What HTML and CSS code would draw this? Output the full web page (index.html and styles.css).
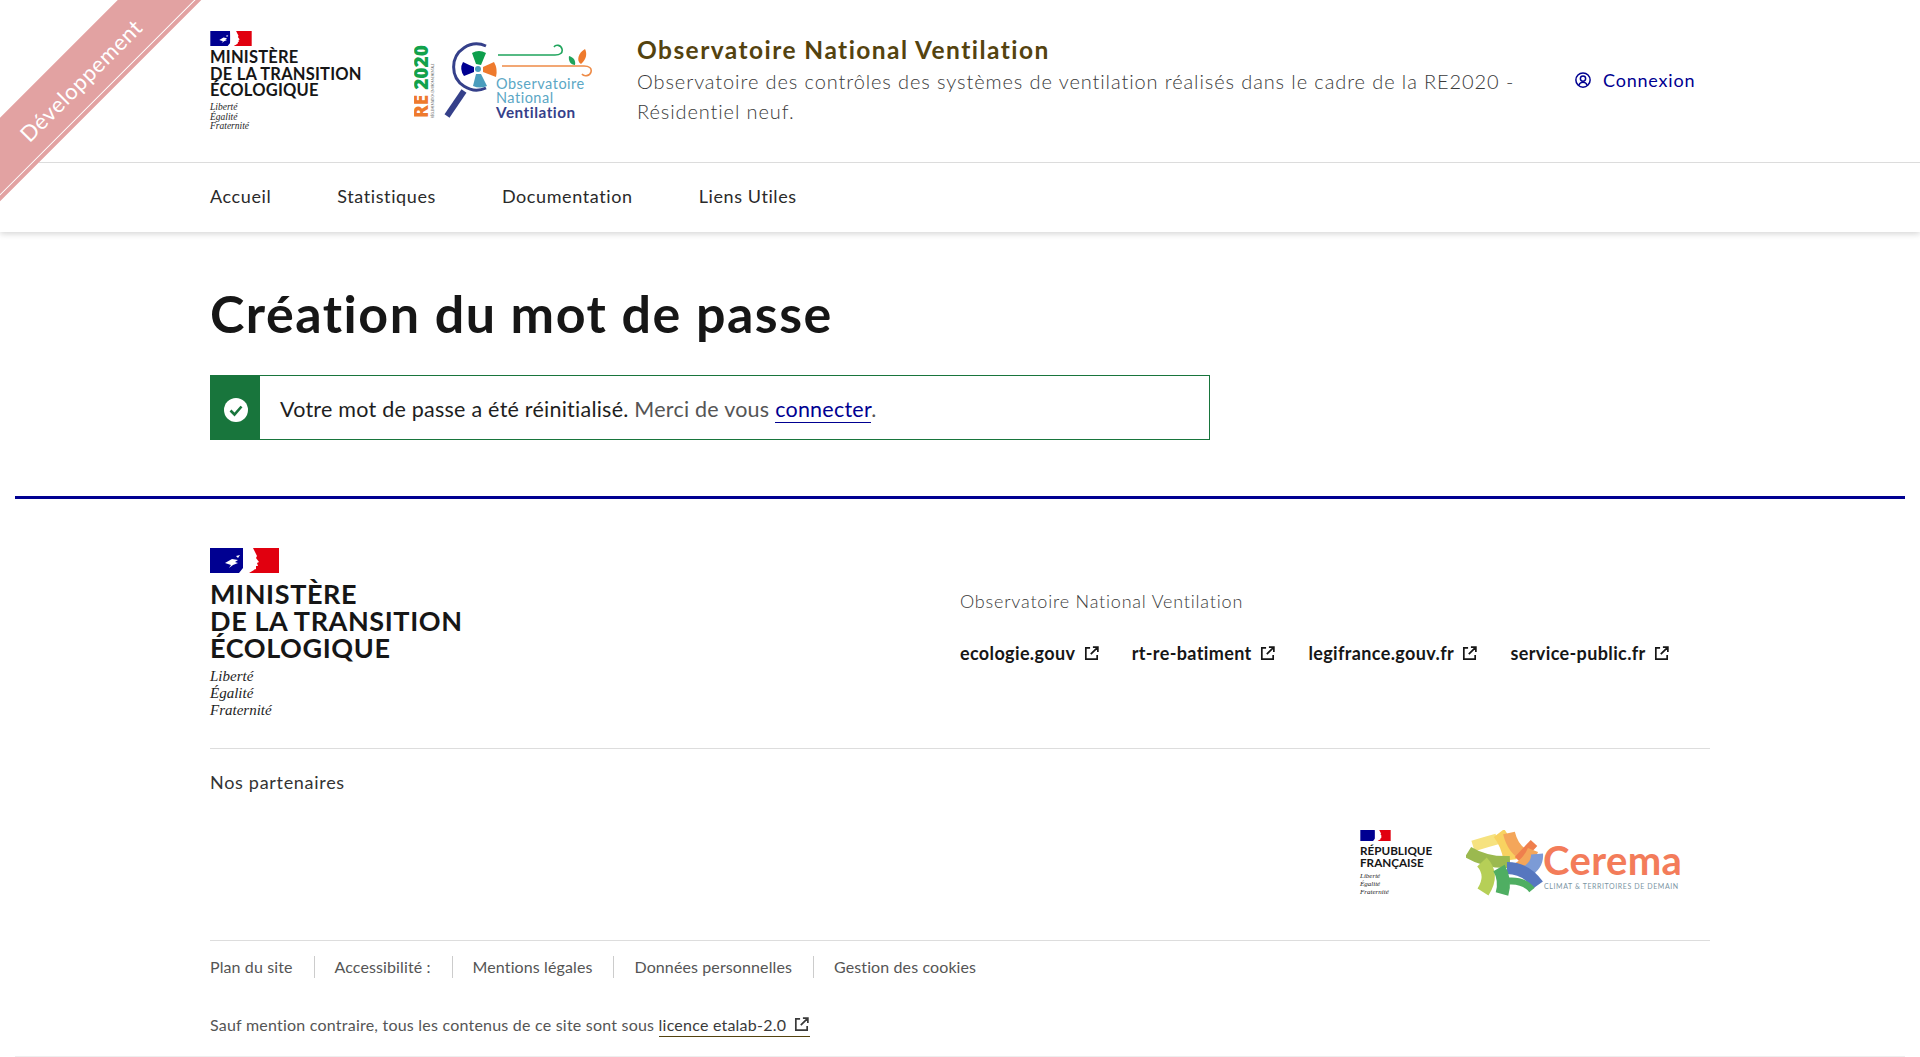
FILE: index.html
```html
<!DOCTYPE html>
<html lang="fr">
<head>
  <meta charset="UTF-8">
  <title>Observatoire National Ventilation</title>
  <link rel="stylesheet" href="styles.css">
</head>
<body>

  <div class="ribbon"><span>Développement</span></div>

  <header class="site-header">
    <div class="header-top">
      <div class="container header-row">
        <div class="bloc-marque">
          <svg class="flag" viewBox="0 0 69 25"><rect width="33" height="25" fill="#000091"/><path d="M43 0H69V25H39V23l4-1 3-1V18h2l-1-3 2-1-3-4 1-2-2-4-2-4z" fill="#e1000f"/><path d="M33 0H40L44 8 43 14 44 22 39 25H29L33 20 36 13 34 6z" fill="#fff"/><path d="M15 15l7-4 6 1-3 2 3 1-5 2-4 3 2-3-6-2zM26 8l4-1-2 3z" fill="#fff"/></svg>
          <div class="marque-name">MINISTÈRE<br>DE LA TRANSITION<br>ÉCOLOGIQUE</div>
          <div class="devise">Liberté<br>Égalité<br>Fraternité</div>
        </div>

        <svg class="logo-onv" viewBox="0 0 180 80">
          <text class="re-text" transform="translate(14 77) rotate(-90)"><tspan fill="#ee7a2d">RE</tspan> <tspan fill="#12a24b">2020</tspan></text>
          <text class="re-small" transform="translate(20 77) rotate(-90)">RÉGLEMENTATION ENVIRONNEMENTALE</text>
          <path d="M72 5A23 23 0 1 0 72 47" fill="none" stroke="#35408a" stroke-width="3"/>
          <path d="M50 50L33 75" stroke="#35408a" stroke-width="6"/>
          <path d="M62 23L58 12Q65 8 72 12L67 24z" fill="#0e9f4c"/>
          <path d="M69 26L80 21Q84 28 82 36L69 31z" fill="#ee7a2d"/>
          <path d="M60 26Q55 24 49 21Q45 28 50 35L60 31z" fill="#000091"/>
          <path d="M62 33L59 45Q66 48 73 45L67 33z" fill="#4a9dbd"/>
          <circle cx="64" cy="28" r="3" fill="#4a9dbd"/>
          <path d="M84 14h57c5 0 8-2 7-6s-6-5-8-2" fill="none" stroke="#1fa45c" stroke-width="1.6"/>
          <path d="M88 25h82c5 0 8 2 7 6s-7 5-9 2" fill="none" stroke="#ee8b47" stroke-width="1.6"/>
          <path d="M171 8c2 4 2 10-4 15-5-3-3-11 4-15z" fill="#ee7a2d"/>
          <path d="M155 15c4 1 7 4 6 9-4 0-7-4-6-9z" fill="#1fa45c"/>
          <text class="onv-light" x="82" y="48">Observatoire</text>
          <text class="onv-light" x="82" y="62">National</text>
          <text class="onv-bold" x="82" y="77">Ventilation</text>
        </svg>

        <div class="service">
          <p class="service-title">Observatoire National Ventilation</p>
          <p class="service-tagline">Observatoire des contrôles des systèmes de ventilation réalisés dans le cadre de la RE2020 - Résidentiel neuf.</p>
        </div>

        <a class="login-link" href="#">
          <svg class="login-icon" viewBox="0 0 24 24"><circle cx="12" cy="12" r="9.5" fill="none" stroke="currentColor" stroke-width="2"/><circle cx="12" cy="10" r="3.5" fill="none" stroke="currentColor" stroke-width="2"/><path d="M6.5 19c1-3 3-4 5.500-4s4.500 1 5.500 4" fill="none" stroke="currentColor" stroke-width="2"/></svg>
          Connexion
        </a>
      </div>
    </div>

    <nav class="container main-nav">
      <a href="#">Accueil</a>
      <a href="#">Statistiques</a>
      <a href="#">Documentation</a>
      <a href="#">Liens Utiles</a>
    </nav>
  </header>

  <main class="container content">
    <h1>Création du mot de passe</h1>
    <div class="alert">
      <div class="alert-icon">
        <svg viewBox="0 0 24 24"><circle cx="12" cy="12" r="12" fill="#fff"/><path d="M6.500 12.500l4 4 7-8" fill="none" stroke="#18753c" stroke-width="2.600"/></svg>
      </div>
      <p>Votre mot de passe a été réinitialisé. <span class="muted">Merci de vous</span> <a href="#">connecter</a><span class="muted">.</span></p>
    </div>
  </main>

  <footer class="site-footer">
    <div class="container">
      <div class="footer-top">
        <div class="footer-marque">
          <svg class="flag" viewBox="0 0 69 25"><rect width="33" height="25" fill="#000091"/><path d="M43 0H69V25H39V23l4-1 3-1V18h2l-1-3 2-1-3-4 1-2-2-4-2-4z" fill="#e1000f"/><path d="M33 0H40L44 8 43 14 44 22 39 25H29L33 20 36 13 34 6z" fill="#fff"/><path d="M15 15l7-4 6 1-3 2 3 1-5 2-4 3 2-3-6-2zM26 8l4-1-2 3z" fill="#fff"/></svg>
          <div class="marque-name">MINISTÈRE<br>DE LA TRANSITION<br>ÉCOLOGIQUE</div>
          <div class="devise">Liberté<br>Égalité<br>Fraternité</div>
        </div>
        <div class="footer-about">
          <p>Observatoire National Ventilation</p>
          <ul class="footer-links">
            <li><a href="#">ecologie.gouv <svg class="ext" viewBox="0 0 24 24"><path d="M10 4H4v16h16v-6M14 3h7v7M21 3L11 13" fill="none" stroke="currentColor" stroke-width="2.400"/></svg></a></li>
            <li><a href="#">rt-re-batiment <svg class="ext" viewBox="0 0 24 24"><path d="M10 4H4v16h16v-6M14 3h7v7M21 3L11 13" fill="none" stroke="currentColor" stroke-width="2.400"/></svg></a></li>
            <li><a href="#">legifrance.gouv.fr <svg class="ext" viewBox="0 0 24 24"><path d="M10 4H4v16h16v-6M14 3h7v7M21 3L11 13" fill="none" stroke="currentColor" stroke-width="2.400"/></svg></a></li>
            <li><a href="#">service-public.fr <svg class="ext" viewBox="0 0 24 24"><path d="M10 4H4v16h16v-6M14 3h7v7M21 3L11 13" fill="none" stroke="currentColor" stroke-width="2.400"/></svg></a></li>
          </ul>
        </div>
      </div>

      <div class="partners">
        <p class="partners-title">Nos partenaires</p>
        <div class="partners-logos">
          <div class="rf-logo">
            <svg class="flag" viewBox="0 0 69 25"><rect width="33" height="25" fill="#000091"/><path d="M43 0H69V25H39V23l4-1 3-1V18h2l-1-3 2-1-3-4 1-2-2-4-2-4z" fill="#e1000f"/><path d="M33 0H40L44 8 43 14 44 22 39 25H29L33 20 36 13 34 6z" fill="#fff"/></svg>
            <div class="marque-name">RÉPUBLIQUE<br>FRANÇAISE</div>
            <div class="devise">Liberté<br>Égalité<br>Fraternité</div>
          </div>
          <svg class="cerema-logo" viewBox="0 0 216 66">
            <g fill="none">
              <path d="M7 16Q20 12 31 9" stroke="#f6e27f" stroke-width="11"/>
              <path d="M33 3Q42 15 44 30" stroke="#f8d260" stroke-width="13"/>
              <path d="M43 3Q47 20 60 26" stroke="#f4a65a" stroke-width="12"/>
              <path d="M52 30L68 13" stroke="#ef7f4d" stroke-width="9"/>
              <path d="M52 38Q62 32 67 20" stroke="#f4a65a" stroke-width="11"/>
              <path d="M60 42Q72 35 71 24" stroke="#7c9bd6" stroke-width="12"/>
              <path d="M2 22Q20 33 44 32" stroke="#9bb94f" stroke-width="12"/>
              <path d="M16 32Q28 45 17 62" stroke="#b6cf57" stroke-width="13"/>
              <path d="M41 38Q60 38 72 55" stroke="#5677bf" stroke-width="12"/>
              <path d="M33 38Q40 50 36 64" stroke="#4fae62" stroke-width="13"/>
              <path d="M43 51Q58 50 66 60" stroke="#4fae62" stroke-width="7"/>
            </g>
            <text class="cerema-name" x="77" y="45">Cerema</text>
            <text class="cerema-tag" x="78" y="59">CLIMAT &amp; TERRITOIRES DE DEMAIN</text>
          </svg>
        </div>
      </div>

      <div class="footer-bottom">
        <ul class="legal-links">
          <li><a href="#">Plan du site</a></li>
          <li><a href="#">Accessibilité :</a></li>
          <li><a href="#">Mentions légales</a></li>
          <li><a href="#">Données personnelles</a></li>
          <li><a href="#">Gestion des cookies</a></li>
        </ul>
        <p class="licence">Sauf mention contraire, tous les contenus de ce site sont sous <a href="#">licence etalab-2.0 <svg class="ext" viewBox="0 0 24 24"><path d="M10 4H4v16h16v-6M14 3h7v7M21 3L11 13" fill="none" stroke="currentColor" stroke-width="2.400"/></svg></a></p>
      </div>
    </div>
  </footer>

</body>
</html>
```

FILE: styles.css
```css
* {
  box-sizing: border-box;
}

body {
  margin: 0;
  font-family: Lato, "Noto Sans", sans-serif;
  color: #1e1e1e;
  background: #fff;
  overflow-x: hidden;
}

p {
  margin: 0;
}

a {
  color: inherit;
  text-decoration: none;
}

ul {
  list-style: none;
  margin: 0;
  padding: 0;
}

.container {
  width: 1500px;
  margin: 0 auto;
}

/* ribbon */
.ribbon {
  position: absolute;
  top: 50px;
  left: -70px;
  width: 300px;
  height: 59px;
  transform: rotate(-45deg);
  background: #e2a2a2;
  box-shadow: inset 0 -4px 0 #e2a2a2, inset 0 -5px 0 #fff;
  color: #fff;
  font-size: 22px;
  line-height: 61px;
  text-align: center;
  letter-spacing: 0.6px;
}

/* header */
.site-header {
  box-shadow: 0 2px 6px rgba(0,0,0,0.16);
}

.header-top {
  height: 163px;
  border-bottom: 1px solid #dcdcdc;
}

.header-row {
  display: flex;
  height: 162px;
  align-items: center;
}

.bloc-marque {
  width: 204px;
  padding-top: 1px;
}

.bloc-marque .flag {
  display: block;
  width: 42px;
  height: 15px;
  margin-bottom: 3px;
}

.bloc-marque .marque-name {
  font-size: 16.5px;
  line-height: 16.7px;
  font-weight: 700;
  color: #161616;
  letter-spacing: 0.2px;
}

.devise {
  font-family: "Liberation Serif", serif;
  font-style: italic;
}

.bloc-marque .devise {
  margin-top: 4px;
  font-size: 9.5px;
  line-height: 9.7px;
}

.logo-onv {
  width: 180px;
  height: 80px;
  flex-shrink: 0;
}

.re-text {
  font-family: "Open Sans", sans-serif;
  font-size: 19px;
  font-weight: 800;
}

.re-small {
  font-size: 2.800px;
  fill: #555;
}

.onv-light {
  font-size: 14.500px;
  fill: #5ba7c5;
  letter-spacing: 0.5px;
}

.onv-bold {
  font-size: 15.300px;
  font-weight: 700;
  fill: #35408a;
  letter-spacing: 0.5px;
}

.service {
  margin-left: 43px;
  width: 900px;
  margin-top: -2px;
}

.service-title {
  font-size: 24.500px;
  line-height: 32px;
  font-weight: 700;
  color: #54430f;
  letter-spacing: 1.450px;
}

.service-tagline {
  font-size: 20px;
  line-height: 30px;
  font-weight: 300;
  color: #3a3a3a;
  letter-spacing: 0.9px;
}

.login-link {
  display: flex;
  align-items: center;
  gap: 11px;
  margin-left: 37px;
  margin-top: -2px;
  font-size: 18px;
  color: #000091;
  letter-spacing: 0.8px;
}

.login-icon {
  width: 18px;
  height: 18px;
}

.main-nav {
  display: flex;
  gap: 66px;
  height: 69px;
  padding-bottom: 4px;
  align-items: center;
  font-size: 18px;
  letter-spacing: 0.6px;
  color: #2a2a2a;
}

/* content */
.content {
  padding-top: 49px;
  height: 264px;
}

h1 {
  margin: 0 0 30px;
  font-size: 52px;
  line-height: 64px;
  font-weight: 700;
  color: #161616;
  letter-spacing: 1.500px;
}

.alert {
  display: flex;
  align-items: center;
  width: 1000px;
  height: 65px;
  border: 1px solid #18753c;
}

.alert-icon {
  display: flex;
  align-items: center;
  justify-content: center;
  width: 49px;
  height: 100%;
  padding-top: 4px;
  background: #18753c;
}

.alert-icon svg {
  width: 24px;
  height: 24px;
}

.alert p {
  margin-left: 20px;
  padding-top: 3px;
  font-size: 21.500px;
  letter-spacing: 0.24px;
}

.alert a {
  color: #000091;
  border-bottom: 1px solid #000091;
}

.muted {
  color: #555;
}

/* footer */
.site-footer {
  margin: 0 15px;
  border-top: 3px solid #000091;
  height: 561px;
  border-bottom: 1px solid #eee;
}

.site-footer .container {
  margin-left: 195px;
}

.footer-top {
  display: flex;
  height: 250px;
  padding-top: 49px;
  border-bottom: 1px solid #ddd;
}

.footer-marque {
  width: 750px;
}

.footer-marque .flag {
  display: block;
  width: 69px;
  height: 25px;
  margin-bottom: 7px;
}

.footer-marque .marque-name {
  font-size: 27px;
  line-height: 27px;
  font-weight: 700;
  color: #161616;
  letter-spacing: 0.6px;
}

.footer-marque .devise {
  margin-top: 7px;
  font-size: 15px;
  line-height: 17px;
}

.footer-about {
  padding-top: 42px;
  font-size: 18px;
  color: #3a3a3a;
  letter-spacing: 0.37px;
}

.footer-about p {
  font-weight: 300;
  letter-spacing: 0.8px;
}

.footer-links {
  display: flex;
  gap: 32px;
  margin-top: 30px;
  font-weight: 700;
  color: #161616;
}

.ext {
  display: inline-block;
  width: 17px;
  height: 17px;
  margin-left: 3px;
  vertical-align: -2px;
}

.partners {
  height: 192px;
  padding-top: 22px;
  border-bottom: 1px solid #ddd;
}

.partners-title {
  font-size: 18px;
  line-height: 22px;
  color: #333;
  letter-spacing: 0.7px;
}

.partners-logos {
  display: flex;
  justify-content: flex-end;
  gap: 34px;
  margin-top: 37px;
  padding-right: 28px;
}

.rf-logo {
  width: 72px;
}

.rf-logo .flag {
  display: block;
  width: 31px;
  height: 11px;
  margin-bottom: 3px;
}

.rf-logo .marque-name {
  font-size: 11.700px;
  line-height: 12px;
  font-weight: 700;
  color: #161616;
}

.rf-logo .devise {
  margin-top: 4px;
  font-size: 7px;
  line-height: 8px;
}

.cerema-logo {
  width: 216px;
  height: 66px;
}

.cerema-name {
  font-size: 40px;
  font-weight: 700;
  fill: #f37c5a;
  letter-spacing: 0.4px;
}

.cerema-tag {
  font-size: 7px;
  fill: #7b95a4;
  letter-spacing: 0.6px;
}

.legal-links {
  display: flex;
  padding-top: 15px;
  font-size: 16px;
  color: #555;
}

.legal-links li {
  padding-right: 21px;
  margin-right: 20px;
  border-right: 1px solid #ccc;
  line-height: 22px;
  letter-spacing: 0.11px;
}

.legal-links li:last-child {
  border-right: none;
}

.licence {
  margin-top: 37px;
  font-size: 16px;
  color: #555;
  letter-spacing: 0.22px;
}

.licence a {
  color: #3a3a3a;
  border-bottom: 1px solid #54430f;
  padding-bottom: 2px;
}
```
